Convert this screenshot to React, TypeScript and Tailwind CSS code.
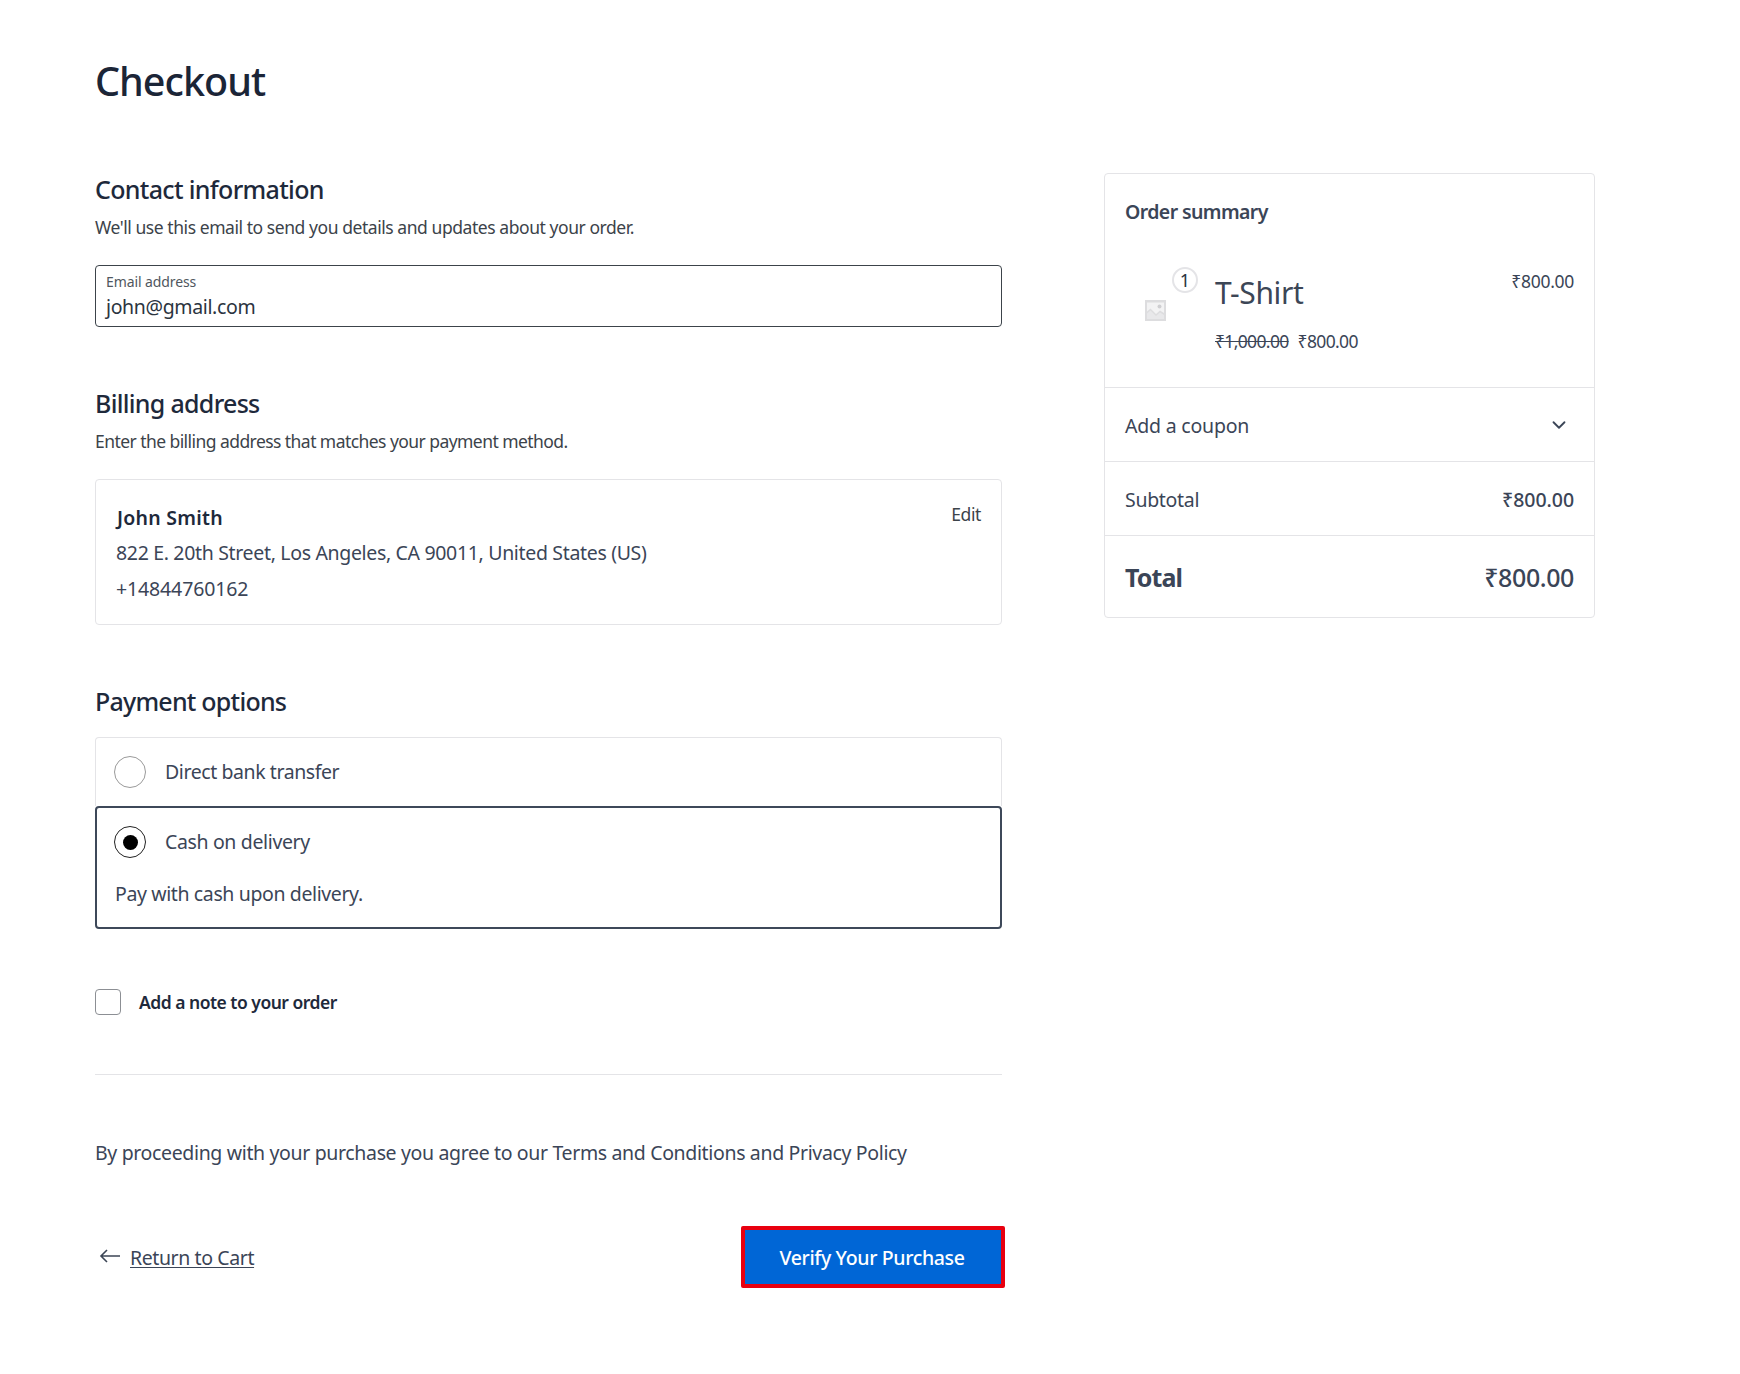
import React from "react";
import { ChevronDown } from "lucide-react";

function Placeholder() {
  return (
    <svg width="21" height="21" viewBox="0 0 21 21" className="block">
      <rect width="21" height="21" fill="#dddddf" />
      <path d="M2 2.5H19V13L15 10.5 11 14 5.5 8.5 2 11.5Z" fill="#f3f3f4" />
      <circle cx="14.5" cy="6.5" r="2" fill="#cfcfd2" />
      <path d="M2 13.5 5.5 10.5 11 16 15 12.5 19 15V19H2Z" fill="#e8e8ea" />
    </svg>
  );
}

export default function App() {
  return (
    <div className="min-h-[1374px] bg-white font-['Noto_Sans',sans-serif] text-[#3b4557]">
      <div className="flex pl-[95px] pt-[57px] items-start">
        <main className="w-[907px] shrink-0">
          <h1 className="text-[39.5px] leading-[48px] font-medium tracking-[-1px] text-[#1b2537]">Checkout</h1>

          <div className="mt-[69px]">
            <h2 className="text-[25px] leading-[30px] font-medium tracking-[-0.67px] text-[#1e293b]">Contact information</h2>
            <p className="mt-[11px] text-[17.5px] leading-6 tracking-[-0.44px] text-[#3c434a]">We'll use this email to send you details and updates about your order.</p>
            <div className="mt-[26px] h-[62px] rounded border border-[#3c434a] px-[10px] pt-[7px]">
              <div className="text-[14px] leading-[17px] tracking-[-0.1px] text-[#50575e]">Email address</div>
              <div className="mt-[3px] text-[19.5px] leading-[28px] tracking-[-0.36px] text-[#2b3440]">john@gmail.com</div>
            </div>
          </div>

          <div className="mt-[61px]">
            <h2 className="text-[25px] leading-[30px] font-medium tracking-[-0.7px] text-[#1e293b]">Billing address</h2>
            <p className="mt-[11px] text-[17.5px] leading-6 tracking-[-0.56px] text-[#3c434a]">Enter the billing address that matches your payment method.</p>
            <div className="relative mt-[26px] h-[146px] rounded border border-[#e4e4e7] px-5 pt-[23px] text-[19.5px] leading-[36px]">
              <div className="pl-[1px] font-semibold leading-[30px] tracking-[0.25px] text-[#1e293b]">John Smith</div>
              <div className="mt-[2px] tracking-[-0.33px]">822 E. 20th Street, Los Angeles, CA 90011, United States (US)</div>
              <div className="tracking-[-0.13px]">+14844760162</div>
              <button className="absolute right-5 top-[22px] text-[17.5px] leading-6 tracking-[-0.4px] text-[#3c434a]">Edit</button>
            </div>
          </div>

          <div className="mt-[61px]">
            <h2 className="text-[25px] leading-[30px] font-medium tracking-[-0.77px] text-[#1e293b]">Payment options</h2>
            <div className="mt-[21px]">
              <div className="flex h-[69px] items-center rounded-t border border-b-0 border-[#e4e4e7] pl-[18px] text-[19.5px] tracking-[-0.42px]">
                <span className="h-[32px] w-[32px] rounded-full border border-[#9a9a9a] bg-white" />
                <span className="ml-[19px]">Direct bank transfer</span>
              </div>
              <div className="h-[123px] rounded border-2 border-[#3d4859] pl-[17px] text-[19.5px]">
                <div className="flex h-[68px] items-center tracking-[-0.36px]">
                  <span className="flex h-[32px] w-[32px] items-center justify-center rounded-full border border-[#222]">
                    <span className="h-[15px] w-[15px] rounded-full bg-black" />
                  </span>
                  <span className="ml-[19px]">Cash on delivery</span>
                </div>
                <p className="pl-[1px] leading-[36px] tracking-[-0.38px]">Pay with cash upon delivery.</p>
              </div>
            </div>
          </div>

          <label className="mt-[60px] flex items-center">
            <span className="h-[26px] w-[26px] rounded border border-[#8c8f94]" />
            <span className="ml-[18px] text-[17.5px] font-semibold tracking-[-0.5px] text-[#1e293b]">Add a note to your order</span>
          </label>

          <hr className="mt-[59px] border-t border-[#e4e4e7]" />

          <p className="mt-[66px] text-[19.5px] leading-6 tracking-[-0.35px]">
            By proceeding with your purchase you agree to our Terms and Conditions and Privacy Policy
          </p>

          <div className="mt-[61px] flex items-center justify-between">
            <a className="flex items-center pl-[4px] text-[19.5px] tracking-[-0.4px]">
              <svg width="22" height="18" viewBox="0 0 22 18" fill="none" stroke="#3c4656" strokeWidth="1.6" className="mb-[2px]">
                <path d="M21 9H2M8 3 2 9l6 6" />
              </svg>
              <span className="ml-[9px] underline underline-offset-2">Return to Cart</span>
            </a>
            <button className="mr-[-3px] h-[62px] w-[264px] rounded-[2px] border-4 border-[#e8000f] bg-[#0066d6] pr-[2px] text-[19.5px] font-medium tracking-[-0.35px] text-white">
              Verify Your Purchase
            </button>
          </div>
        </main>

        <aside className="ml-[102px] mt-[116px] w-[491px] shrink-0 rounded border border-[#e4e4e7]">
          <div className="h-[213px] px-5 pt-[23px]">
            <h3 className="text-[19.5px] leading-[30px] font-semibold tracking-[-0.6px]">Order summary</h3>
            <div className="mt-[45px] flex items-start">
              <div className="relative h-[70px] w-[90px] shrink-0">
                <div className="absolute left-[20px] top-[28px]"><Placeholder /></div>
                <div className="absolute left-[47px] top-[-5px] flex h-[26px] w-[26px] items-center justify-center rounded-full border-2 border-[#e4e4e7] bg-white text-[18px] text-[#2b3440]">1</div>
              </div>
              <div>
                <div className="mt-[1px] text-[30px] leading-[40px] tracking-[-0.4px] text-[#3c4656]">T-Shirt</div>
                <div className="mt-[16px] text-[17.5px] leading-6 tracking-[-0.65px]">
                  <s>₹1,000.00</s>
                  <span className="ml-[9px]">₹800.00</span>
                </div>
              </div>
              <div className="ml-auto mt-[-3px] text-[17.5px] leading-6 tracking-[-0.3px]">₹800.00</div>
            </div>
          </div>
          <div className="flex h-[74px] items-center justify-between border-t border-[#e4e4e7] px-5 pt-[2px] text-[19.5px] tracking-[-0.2px]">
            <span>Add a coupon</span>
            <ChevronDown size={22} strokeWidth={2} className="mb-[2px] mr-[4px]" />
          </div>
          <div className="flex h-[74px] items-center justify-between border-t border-[#e4e4e7] px-5 pt-[2px] text-[19.5px]">
            <span className="tracking-[-0.3px]">Subtotal</span>
            <span className="font-medium tracking-[-0.05px]">₹800.00</span>
          </div>
          <div className="flex h-[82px] items-center justify-between border-t border-[#e4e4e7] px-5 pt-[2px] text-[25px]">
            <span className="font-bold tracking-[-0.9px]">Total</span>
            <span className="font-medium tracking-[-0.4px]">₹800.00</span>
          </div>
        </aside>
      </div>
    </div>
  );
}
